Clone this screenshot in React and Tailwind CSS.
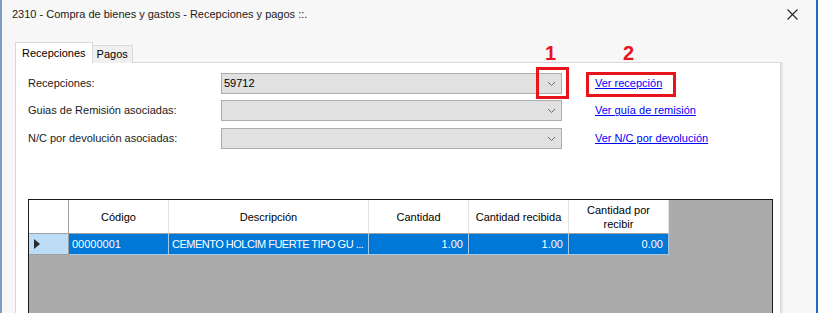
import React from 'react';

const font = { fontFamily: '"Liberation Sans", Arial, sans-serif' };

function Combo({ value }) {
  return (
    <div className="w-[341px] h-[21px] bg-[#e1e1e1] border border-[#adadad] flex items-center justify-between pl-[2px] pr-[5px] text-[11px] text-black">
      <span>{value}</span>
      <svg width="9" height="6" viewBox="0 0 9 6">
        <polyline points="1,1 4.5,4.5 8,1" fill="none" stroke="#6a6a6a" strokeWidth="1" />
      </svg>
    </div>
  );
}

function FieldRow({ label, value, link, className }) {
  return (
    <div className={`flex items-center h-[21px] ${className}`}>
      <span className="w-[193px] text-[11px] text-[#1a1a1a]">{label}</span>
      <Combo value={value} />
      <a className="ml-[33px] text-[11px] text-[#0000ff] underline cursor-pointer">{link}</a>
    </div>
  );
}

const cols = [
  { label: 'Código', w: 'w-[100px]' },
  { label: 'Descripción', w: 'w-[200px]' },
  { label: 'Cantidad', w: 'w-[100px]' },
  { label: 'Cantidad recibida', w: 'w-[100px]' },
  { label: 'Cantidad por recibir', w: 'w-[100px]' },
];

export default function App() {
  return (
    <div style={font} className="relative w-[818px] h-[313px] overflow-hidden bg-[#f7f7f7] border-l-2 border-l-[#7d9cc0] border-r-2 border-r-[#1e6cc0] flex flex-col">
      {/* title bar */}
      <div className="h-[29px] flex items-center justify-between pl-[10px] pr-[18px] shrink-0">
        <span className="text-[11px] text-[#1a1a1a]">2310 - Compra de bienes y gastos - Recepciones y pagos ::.</span>
        <svg width="11" height="11" viewBox="0 0 11 11">
          <path d="M0.5 0.5 L10.5 10.5 M10.5 0.5 L0.5 10.5" stroke="#222" strokeWidth="1.1" />
        </svg>
      </div>

      {/* tabs */}
      <div className="mt-[13px] pl-[13px] flex items-end shrink-0 relative z-10">
        <div className="h-[21px] px-[6px] bg-white border border-b-0 border-[#d9d9d9] flex items-center text-[11px] text-black">
          Recepciones
        </div>
        <div className="h-[18px] px-[4px] bg-[#f0f0f0] border border-l-0 border-b-0 border-[#d9d9d9] flex items-center text-[11px] text-black">
          Pagos
        </div>
      </div>

      {/* panel */}
      <div className="ml-[13px] w-[766px] flex-1 -mt-px bg-white border border-[#d9d9d9] border-b-0 shadow-[2px_0_0_#e6e6e6] pl-[12px] pt-[10px]">
        <FieldRow label="Recepciones:" value="59712" link="Ver recepción" />
        <FieldRow label="Guias de Remisión asociadas:" value="" link="Ver guía de remisión" className="mt-[6px]" />
        <FieldRow label="N/C por devolución asociadas:" value="" link="Ver N/C por devolución" className="mt-[7px]" />

        {/* grid */}
        <div className="mt-[50px] w-[745px] h-[120px] bg-[#ababab] border border-[#1a1a1a] border-b-0">
          <div className="flex h-[34px] bg-[#ababab]">
            <div className="w-[40px] h-full bg-white border-r border-b border-[#a0a0a0]" />
            {cols.map((c) => (
              <div key={c.label} className={`${c.w} h-full bg-white border-r border-r-[#e3e3e3] border-b border-b-[#a0a0a0] flex items-center justify-center text-center text-[11px] leading-[14px] text-black px-[2px]`}>
                {c.label === 'Cantidad por recibir' ? (
                  <span>Cantidad por<br />recibir</span>
                ) : (
                  <span className="whitespace-nowrap">{c.label}</span>
                )}
              </div>
            ))}
          </div>
          <div className="flex h-[21px] text-[11px] text-white">
            <div className="w-[40px] h-full bg-[#bddcf5] border-r border-b border-[#a0a0a0] flex items-center pl-[5px]">
              <svg width="6" height="10" viewBox="0 0 6 10">
                <polygon points="0,0 6,5 0,10" fill="#2a2a2a" />
              </svg>
            </div>
            <div className="w-[100px] h-full bg-[#0078d7] border-r border-b border-[#a7c8e6] flex items-center pl-[3px]">00000001</div>
            <div className="w-[200px] h-full bg-[#0078d7] border-r border-b border-[#a7c8e6] flex items-center pl-[3px] whitespace-nowrap overflow-hidden tracking-[-0.5px]">CEMENTO HOLCIM FUERTE TIPO GU ...</div>
            <div className="w-[100px] h-full bg-[#0078d7] border-r border-b border-[#a7c8e6] flex items-center justify-end pr-[5px]">1.00</div>
            <div className="w-[100px] h-full bg-[#0078d7] border-r border-b border-[#a7c8e6] flex items-center justify-end pr-[5px]">1.00</div>
            <div className="w-[100px] h-full bg-[#0078d7] border-r border-b border-[#a7c8e6] flex items-center justify-end pr-[5px]">0.00</div>
          </div>
        </div>
      </div>

      {/* red annotations */}
      <div className="absolute left-[534px] top-[67px] w-[33px] h-[32px] border-[3px] border-[#e8141c]" />
      <div className="absolute left-[584px] top-[72px] w-[90px] h-[25px] border-[3px] border-[#e8141c]" />
      <span className="absolute left-[543px] top-[43px] text-[20px] font-bold leading-none text-[#e8141c]">1</span>
      <span className="absolute left-[621px] top-[43px] text-[20px] font-bold leading-none text-[#e8141c]">2</span>
    </div>
  );
}
